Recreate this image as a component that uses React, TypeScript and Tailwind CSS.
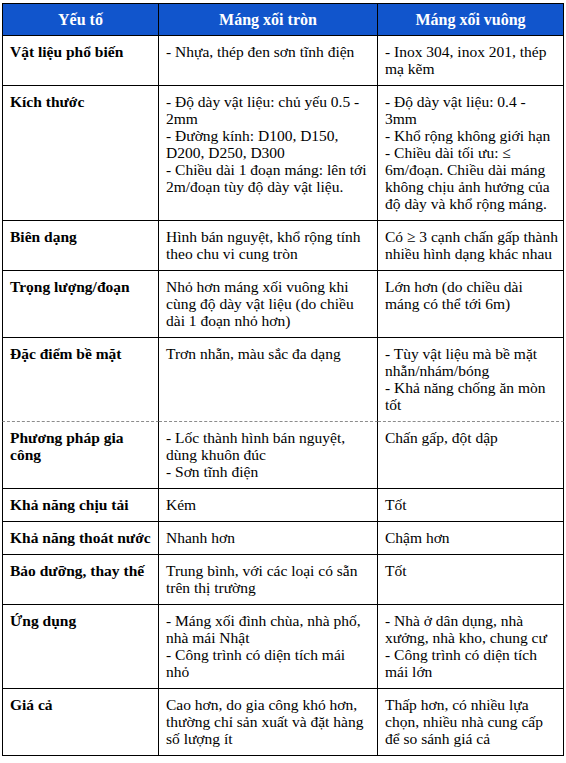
import React from 'react';

type Row = {
  label: string[];
  round: string[];
  square: string[];
  dashed?: boolean;
};

// each string is one visual line, as in the reference
const rows: Row[] = [
  {
    label: ['Vật liệu phổ biến'],
    round: ['- Nhựa, thép đen sơn tĩnh điện'],
    square: ['- Inox 304, inox 201, thép', 'mạ kẽm'],
  },
  {
    label: ['Kích thước'],
    round: [
      '- Độ dày vật liệu: chủ yếu 0.5 -',
      '2mm',
      '- Đường kính: D100, D150,',
      'D200, D250, D300',
      '- Chiều dài 1 đoạn máng: lên tới',
      '2m/đoạn tùy độ dày vật liệu.',
    ],
    square: [
      '- Độ dày vật liệu: 0.4 -',
      '3mm',
      '- Khổ rộng không giới hạn',
      '- Chiều dài tối ưu: ≤',
      '6m/đoạn. Chiều dài máng',
      'không chịu ảnh hưởng của',
      'độ dày và khổ rộng máng.',
    ],
  },
  {
    label: ['Biên dạng'],
    round: ['Hình bán nguyệt, khổ rộng tính', 'theo chu vi cung tròn'],
    square: ['Có ≥ 3 cạnh chấn gấp thành', 'nhiều hình dạng khác nhau'],
  },
  {
    label: ['Trọng lượng/đoạn'],
    round: ['Nhỏ hơn máng xối vuông khi', 'cùng độ dày vật liệu (do chiều', 'dài 1 đoạn nhỏ hơn)'],
    square: ['Lớn hơn (do chiều dài', 'máng có thể tới 6m)'],
  },
  {
    label: ['Đặc điểm bề mặt'],
    round: ['Trơn nhẵn, màu sắc đa dạng'],
    square: ['- Tùy vật liệu mà bề mặt', 'nhẵn/nhám/bóng', '- Khả năng chống ăn mòn', 'tốt'],
    dashed: true,
  },
  {
    label: ['Phương pháp gia', 'công'],
    round: ['- Lốc thành hình bán nguyệt,', 'dùng khuôn đúc', '- Sơn tĩnh điện'],
    square: ['Chấn gấp, đột dập'],
  },
  {
    label: ['Khả năng chịu tải'],
    round: ['Kém'],
    square: ['Tốt'],
  },
  {
    label: ['Khả năng thoát nước'],
    round: ['Nhanh hơn'],
    square: ['Chậm hơn'],
  },
  {
    label: ['Bảo dưỡng, thay thế'],
    round: ['Trung bình, với các loại có sẵn', 'trên thị trường'],
    square: ['Tốt'],
  },
  {
    label: ['Ứng dụng'],
    round: ['- Máng xối đình chùa, nhà phố,', 'nhà mái Nhật', '- Công trình có diện tích mái', 'nhỏ'],
    square: ['- Nhà ở dân dụng, nhà', 'xưởng, nhà kho, chung cư', '- Công trình có diện tích', 'mái lớn'],
  },
  {
    label: ['Giá cả'],
    round: ['Cao hơn, do gia công khó hơn,', 'thường chỉ sản xuất và đặt hàng', 'số lượng ít'],
    square: ['Thấp hơn, có nhiều lựa', 'chọn, nhiều nhà cung cấp', 'để so sánh giá cả'],
  },
];

const cell = 'border-r border-b border-black px-[7px] pt-[7px] pb-[8px] align-top';
const solid = 'border-b-black';
const dashed = 'border-b-[#8c8c8c] [border-bottom-style:dashed]';
const head = 'border-t border-r border-b border-black text-center align-middle text-[16px] font-bold text-white';

const Lines = ({ lines }: { lines: string[] }) => (
  <>
    {lines.map((l, i) => (
      <div key={i} className="whitespace-nowrap">
        {l}
      </div>
    ))}
  </>
);

export default function App() {
  return (
    <div className="min-h-screen bg-white pl-[2px] pt-[3px] font-['Liberation_Serif'] text-[15.5px] leading-[17px] text-black">
      <table className="w-[562px] table-fixed border-separate border-spacing-0">
        <colgroup>
          <col className="w-[157px]" />
          <col className="w-[219px]" />
          <col className="w-[186px]" />
        </colgroup>
        <thead>
          <tr className="h-[33px] bg-[#1155cc]">
            <th className={head + ' border-l'}>Yếu tố</th>
            <th className={head}>Máng xối tròn</th>
            <th className={head}>Máng xối vuông</th>
          </tr>
        </thead>
        <tbody>
          {rows.map((r, i) => {
            const edge = r.dashed ? dashed : solid;
            return (
              <tr key={i}>
                <td className={cell + ' border-l font-bold ' + edge}>
                  <Lines lines={r.label} />
                </td>
                <td className={cell + ' ' + edge}>
                  <Lines lines={r.round} />
                </td>
                <td className={cell + ' ' + edge}>
                  <Lines lines={r.square} />
                </td>
              </tr>
            );
          })}
        </tbody>
      </table>
    </div>
  );
}
